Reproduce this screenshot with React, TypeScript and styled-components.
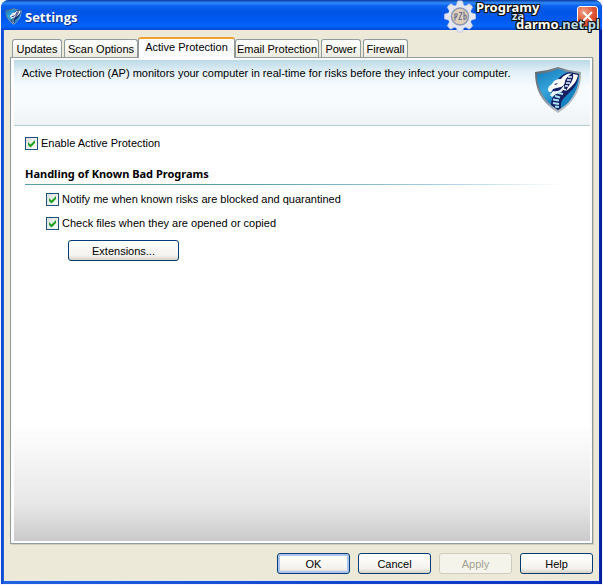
import React, { useState } from "react";
import styled, { createGlobalStyle, css } from "styled-components";

const GlobalStyle = createGlobalStyle`
  * { box-sizing: border-box; }
  body {
    margin: 0;
    background: #f4f6fb;
    color: #000;
    font: 11px/14px "Liberation Sans", Arial, sans-serif;
  }
  button, input { font: inherit; }
`;

const Window = styled.main`
  position: relative;
  display: flex;
  flex-direction: column;
  min-height: calc(100vh - 1px);
  margin: 0 1px;
  padding: 0 3px 3px;
  border-radius: 8px 8px 0 0;
  background: linear-gradient(90deg, #0a3fd0, #1f62e0 3px, #0b2fc0 calc(100% - 3px), #00148c);
`;

const TitleBar = styled.header`
  display: flex;
  align-items: center;
  gap: 3px;
  height: 30px;
  margin: 0 -3px;
  padding: 3px 4px 0 4px;
  border-radius: 8px 8px 0 0;
  background: linear-gradient(#0a3c9c, #2f8bff 3px, #0a60ee 6px, #0055e5 12px, #0059f0 20px, #0066ff 26px, #0048cf);
`;

const Title = styled.h1`
  flex: 1;
  margin: 0;
  color: #fff;
  font: bold 13px/20px "Open Sans", "Noto Sans", sans-serif;
  text-shadow: 1px 1px 1px #0a2a80;
`;

const CloseButton = styled.button`
  display: grid;
  place-items: center;
  width: 21px;
  height: 21px;
  padding: 0;
  border: 1px solid #fff;
  border-radius: 3px;
  background: radial-gradient(circle at 30% 25%, #f0a088, #df5434 50%, #c83c1c);
`;

const Body = styled.div`
  flex: 1;
  display: flex;
  flex-direction: column;
  padding: 7px 6px 6px;
  background: #ece9d8;
  border-bottom: 1px solid #dfe6f4;
`;

const TabStrip = styled.div`
  display: flex;
  align-items: flex-end;
  padding: 0 2px;
`;

const Tab = styled.button<{ $active: boolean; $width: number }>`
  flex: 0 1 ${(p) => p.$width}px;
  height: 18px;
  margin-right: 2px;
  padding: 1px 0 0;
  border: 1px solid #919b9c;
  border-bottom: 0;
  border-radius: 3px 3px 0 0;
  background: linear-gradient(#fff, #f6f5ee 60%, #ebe9e0);
  white-space: nowrap;
  line-height: 14px;
  ${(p) =>
    p.$active &&
    css`
      position: relative;
      z-index: 1;
      height: 21px;
      margin: 0 0 -1px -2px;
      padding: 0 0 3px;
      border-top: 2px solid #f0a030;
      background: #fcfcfe;
    `}
`;

const Panel = styled.section`
  flex: 1;
  display: flex;
  flex-direction: column;
  padding: 2px 2px 2px 3px;
  border: 1px solid #919b9c;
  background: #fcfcfe;
  box-shadow: 1px 1px 0 #d0cebf;
`;

const Intro = styled.div`
  display: flex;
  justify-content: space-between;
  height: 66px;
  padding: 6px 8px 0;
  border-bottom: 1px solid #b9ccd4;
  background: linear-gradient(#bbd9e6, #e3f0f7 12px, #f8fbfe 26px, #f8fbfe 42px, #eef3f6);
`;

const IntroText = styled.p`
  margin: 0;
  white-space: nowrap;
`;

const Page = styled.div`
  flex: 1;
  display: flex;
  flex-direction: column;
  align-items: flex-start;
  padding: 10px 11px;
  background: linear-gradient(#fff 0 72%, #e7e7e7 91%, #cacaca);
`;

const Heading = styled.h2`
  align-self: stretch;
  margin: 16px 0 7px;
  padding-bottom: 2px;
  border-bottom: 1px solid;
  border-image: linear-gradient(90deg, #5a9daa 40%, #a8d0e0 75%, transparent 97%) 1;
  font: bold 11px/16px "Noto Sans", "Open Sans", sans-serif;
`;

const Options = styled.div`
  display: flex;
  flex-direction: column;
  align-items: flex-start;
  gap: 10px;
  padding-left: 21px;
`;

const Label = styled.label`
  display: flex;
  align-items: center;
  gap: 3px;
`;

const CheckWrap = styled.span`
  display: grid;
  width: 13px;
  height: 13px;
  & > * { grid-area: 1 / 1; }
  svg { pointer-events: none; }
  input:not(:checked) + svg { visibility: hidden; }
`;

const CheckInput = styled.input`
  appearance: none;
  width: 13px;
  height: 13px;
  margin: 0;
  border: 1px solid #1c5180;
  background: linear-gradient(135deg, #dcdcd7, #fff);
`;

const Button = styled.button<{ $primary?: boolean; $wide?: boolean }>`
  width: ${(p) => (p.$wide ? 111 : 73)}px;
  height: 21px;
  padding: 0;
  border: 1px solid #003c74;
  border-radius: 3px;
  color: #000;
  background: linear-gradient(#fff, #f4f3ee 75%, #d8d2c5);
  ${(p) => p.$primary && css`box-shadow: inset 0 0 0 2px #a9c5f0;`}
  &:disabled {
    border-color: #d0cdbf;
    color: #a1a192;
    background: #f5f4ea;
  }
`;

const ExtensionsRow = styled.div`
  padding: 0 22px;
`;

const Footer = styled.footer`
  display: flex;
  justify-content: flex-end;
  gap: 8px;
  padding-top: 9px;
`;

const Watermark = styled.aside`
  position: absolute;
  top: 0;
  right: 0;
  display: flex;
  align-items: flex-start;
  pointer-events: none;
`;

const WatermarkText = styled.div`
  width: 126px;
  color: #fff;
  font-family: "Noto Sans", "Open Sans", sans-serif;
  font-weight: bold;
  text-shadow: -1px -1px #111, 1px -1px #111, -1px 1px #111, 1px 1px #111, 0 1px #111, 1px 0 #111;
`;

const WatermarkLine = styled.div<{ $indent: number; $small?: boolean }>`
  padding-left: ${(p) => p.$indent}px;
  margin: ${(p) => (p.$small ? "-6px 0" : "0")};
  font-size: ${(p) => (p.$small ? 11 : 13)}px;
  line-height: ${(p) => (p.$small ? 14 : 15)}px;
  color: ${(p) => (p.$small ? "#d4e4ff" : "#fff")};
`;

const Faded = styled.span`
  color: #b9dce8;
`;

function Shield({ size }: { size: number }) {
  return (
    <svg width={size} height={size} viewBox="0 0 48 48" aria-hidden="true">
      <defs>
        <linearGradient id="rim" x1="0" y1="0" x2="1" y2="1">
          <stop offset="0" stopColor="#566068" />
          <stop offset=".45" stopColor="#8d979d" />
          <stop offset="1" stopColor="#d8dee2" />
        </linearGradient>
        <linearGradient id="face" x1="0" y1="0" x2=".5" y2="1">
          <stop offset="0" stopColor="#1279b8" />
          <stop offset=".5" stopColor="#36a5dc" />
          <stop offset="1" stopColor="#1273b0" />
        </linearGradient>
      </defs>
      <path d="M1 6Q13 5 24 1Q35 5 47 6Q47 18 43 27Q37 39 24 47Q11 39 5 27Q1 18 1 6Z" fill="url(#rim)" />
      <path d="M3 8Q15 7 24 3Q34 7 45 8Q45 18 41 26Q36 37 24 44Q12 37 7 26Q3 18 3 8Z" fill="url(#face)" />
      <path d="M45 8Q45 18 41 26Q36 37 27 42Q25 37 30 32Q39 25 42 15Z" fill="#1583c2" />
      <path d="M25 12Q32 5 38 6.500L45 8Q44 17 39 23Q34 28 30 32Q26 36 27 42L24 44L17 39Q17 31 23 27Q20 25 17 27Z" fill="#151f63" />
      <path d="M14 24Q14 20 18 18Q20 13 27 13Q31 7 38 7.500Q33 10 31 15Q31 19 27 21Q22 22 19 23L17 26L15 26Z" fill="#fff" />
      <path d="M16 29L19 25Q25 26 28 22L30 19Q31 22 29 24Q27 27 22 28L18 31Z" fill="#e8f7ff" />
      <path d="M39 8L44 9Q43 15 38 20Q34 24 32 25Q34 21 36 18Q40 13 39 8Z" fill="#fff" />
      <path d="M34 11L38 11M33 14L37 14M32 17L36 17M31 20L34 20M29 23L32 24" stroke="#e8f7ff" strokeWidth="1.500" />
      <path d="M24 27L29 28M21 30L26 31.500M19 33.500L25 34.500M19 37L25 38M21 40.500L25 41" stroke="#a9e4fa" strokeWidth="2" />
      <path d="M20 18L24 17L22 19Z" fill="#17266c" />
    </svg>
  );
}

function Gear() {
  return (
    <svg width="32" height="33" viewBox="-16 -16 32 32" aria-hidden="true">
      <g fill="#e4e7f3" stroke="#b7bed6" strokeWidth=".6">
        {[0, 45, 90, 135, 180, 225, 270, 315].map((angle) => (
          <path key={angle} d="M-4-10L-2.500-15.500Q0-16 2.500-15.500L4-10Z" transform={`rotate(${angle})`} />
        ))}
        <circle r="12" stroke="none" />
      </g>
      <circle r="8.500" fill="#dfcdbc" stroke="#8d98ad" strokeWidth="1.500" />
      <path d="M-6-2Q-2-4-3-1Q-4 2-6 1M-5-2V4M-1-4H2L-1 3H2M4-5V3Q7 3 6-1Q5-2 4 0" fill="none" stroke="#6b7690" strokeWidth="1.100" />
    </svg>
  );
}

function Check({ label }: { label: string }) {
  return (
    <Label>
      <CheckWrap>
        <CheckInput type="checkbox" defaultChecked />
        <svg width="13" height="13" viewBox="0 0 13 13" aria-hidden="true">
          <path d="M3 5V8L5.500 10.500L10 6V3L5.500 7.500Z" fill="#21a121" />
        </svg>
      </CheckWrap>
      {label}
    </Label>
  );
}

const tabs = [
  { name: "Updates", width: 50 },
  { name: "Scan Options", width: 74 },
  { name: "Active Protection", width: 97 },
  { name: "Email Protection", width: 84 },
  { name: "Power", width: 40 },
  { name: "Firewall", width: 45 },
];

export default function App() {
  const [active, setActive] = useState("Active Protection");
  return (
    <>
      <GlobalStyle />
      <Window>
        <TitleBar>
          <Shield size={17} />
          <Title>Settings</Title>
          <CloseButton aria-label="Close">
            <svg width="13" height="13" viewBox="0 0 13 13" aria-hidden="true">
              <path d="M2 2L11 11M11 2L2 11" stroke="#fff" strokeWidth="2" />
            </svg>
          </CloseButton>
        </TitleBar>
        <Body>
          <TabStrip role="tablist">
            {tabs.map((tab) => (
              <Tab
                key={tab.name}
                role="tab"
                aria-selected={tab.name === active}
                $active={tab.name === active}
                $width={tab.width}
                onClick={() => setActive(tab.name)}
              >
                {tab.name}
              </Tab>
            ))}
          </TabStrip>
          <Panel role="tabpanel">
            <Intro>
              <IntroText>
                Active Protection (AP) monitors your computer in real-time for risks before they infect your computer.
              </IntroText>
              <Shield size={48} />
            </Intro>
            <Page>
              <Check label="Enable Active Protection" />
              <Heading>Handling of Known Bad Programs</Heading>
              <Options>
                <Check label="Notify me when known risks are blocked and quarantined" />
                <Check label="Check files when they are opened or copied" />
                <ExtensionsRow>
                  <Button $wide>Extensions...</Button>
                </ExtensionsRow>
              </Options>
            </Page>
          </Panel>
          <Footer>
            <Button $primary>OK</Button>
            <Button>Cancel</Button>
            <Button disabled>Apply</Button>
            <Button>Help</Button>
          </Footer>
        </Body>
        <Watermark>
          <Gear />
          <WatermarkText>
            <WatermarkLine $indent={0}>Programy</WatermarkLine>
            <WatermarkLine $indent={36} $small>za</WatermarkLine>
            <WatermarkLine $indent={40}>darmo<Faded>.net.pl</Faded></WatermarkLine>
          </WatermarkText>
        </Watermark>
      </Window>
    </>
  );
}
